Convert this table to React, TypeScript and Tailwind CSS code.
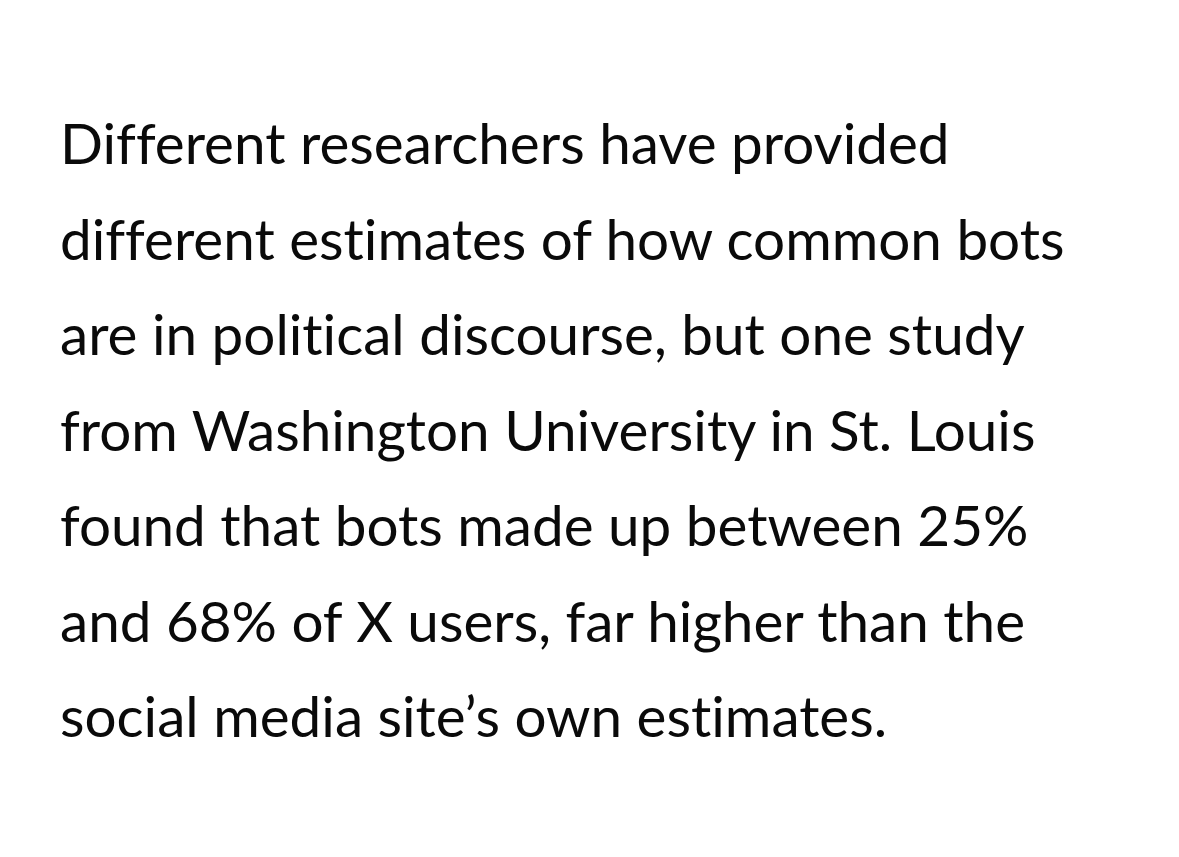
const LINES = [
  "Different researchers have provided",
  "different estimates of how common bots",
  "are in political discourse, but one study",
  "from Washington University in St. Louis",
  "found that bots made up between 25%",
  "and 68% of X users, far higher than the",
  "social media site\u2019s own estimates.",
];

export default function App() {
  return (
    <div className="min-h-[857px] w-full bg-white">
      <div className="pl-[60px] pt-[95px] font-['Lato','Noto_Sans',sans-serif] text-[56.6px] leading-[95.5px] text-[#0a0a0a] [font-variant-ligatures:none]">
        {LINES.map((line) => (
          <p key={line} className="whitespace-nowrap">
            {line}
          </p>
        ))}
      </div>
    </div>
  );
}
